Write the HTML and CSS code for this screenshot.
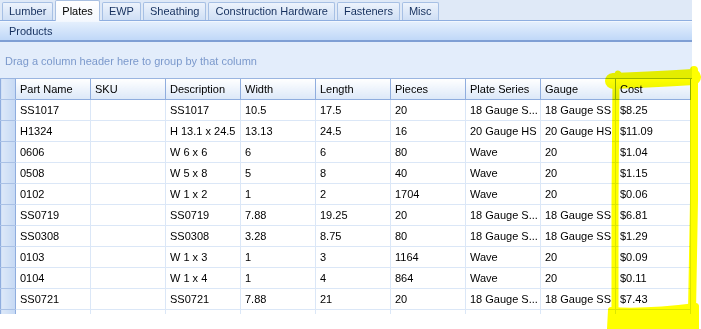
FILE: index.html
```html
<!DOCTYPE html>
<html lang="en">
<head>
    <meta charset="UTF-8">
    <title>Products - Plates</title>
    <link rel="stylesheet" href="styles.css">
</head>
<body>
    <div class="app">
        <!-- Tab strip -->
        <div class="tabs">
            <span class="tab">Lumber</span>
            <span class="tab active">Plates</span>
            <span class="tab">EWP</span>
            <span class="tab">Sheathing</span>
            <span class="tab">Construction Hardware</span>
            <span class="tab">Fasteners</span>
            <span class="tab">Misc</span>
        </div>

        <div class="title-bar">Products</div>

        <div class="group-panel">Drag a column header here to group by that column</div>

        <!-- Grid -->
        <div class="grid">
            <table>
                <thead>
                    <tr>
                        <th class="ind"></th>
                        <th>Part Name</th>
                        <th>SKU</th>
                        <th>Description</th>
                        <th>Width</th>
                        <th>Length</th>
                        <th>Pieces</th>
                        <th>Plate Series</th>
                        <th>Gauge</th>
                        <th>Cost</th>
                    </tr>
                </thead>
                <tbody id="rows"></tbody>
            </table>
        </div>
    </div>

    <svg class="marker" width="701" height="329" viewBox="0 0 701 329">
        <path d="M615,329 L615,200 L616,80 L618,74" />
        <path d="M613,81 C640,80 665,79 693,77" class="thick" />
        <path d="M694,70 L694,200 L692,312" class="right" />
        <path d="M611,310 C640,312 665,310 696,306 L696,329 L610,329 Z" class="fill" />
    </svg>

    <script>
        const plates = [
            ["SS1017", "", "SS1017", "10.5", "17.5", "20", "18 Gauge S...", "18 Gauge SS", "$8.25"],
            ["H1324", "", "H 13.1 x 24.5", "13.13", "24.5", "16", "20 Gauge HS", "20 Gauge HS", "$11.09"],
            ["0606", "", "W 6 x 6", "6", "6", "80", "Wave", "20", "$1.04"],
            ["0508", "", "W 5 x 8", "5", "8", "40", "Wave", "20", "$1.15"],
            ["0102", "", "W 1 x 2", "1", "2", "1704", "Wave", "20", "$0.06"],
            ["SS0719", "", "SS0719", "7.88", "19.25", "20", "18 Gauge S...", "18 Gauge SS", "$6.81"],
            ["SS0308", "", "SS0308", "3.28", "8.75", "80", "18 Gauge S...", "18 Gauge SS", "$1.29"],
            ["0103", "", "W 1 x 3", "1", "3", "1164", "Wave", "20", "$0.09"],
            ["0104", "", "W 1 x 4", "1", "4", "864", "Wave", "20", "$0.11"],
            ["SS0721", "", "SS0721", "7.88", "21", "20", "18 Gauge S...", "18 Gauge SS", "$7.43"],
            ["0305", "", "W 3 x 5", "3", "5", "272", "Wave", "20", "$0.45"]
        ];

        const tbody = document.getElementById("rows");
        plates.forEach(row => {
            const tr = document.createElement("tr");
            tr.innerHTML = '<td class="ind"></td>' + row.map(v => `<td>${v}</td>`).join('');
            tbody.appendChild(tr);
        });
    </script>
</body>
</html>
```

FILE: styles.css
```css
* {
    margin: 0;
    padding: 0;
    box-sizing: border-box;
}

body {
    background: #fff;
    font-family: 'Liberation Sans', Arial, sans-serif;
    font-size: 11px;
    color: #000;
    width: 701px;
    height: 329px;
    overflow: hidden;
    position: relative;
}

.app {
    width: 692px;
    height: 314px;
    background: #dfe9f7;
    overflow: hidden;
}

/* Tabs */
.tabs {
    height: 21px;
    display: flex;
    align-items: flex-end;
    gap: 2px;
    padding-left: 2px;
    border-bottom: 1px solid #8eaee0;
    background: #dfe9f7;
}

.tab {
    height: 18px;
    padding: 0 6px;
    line-height: 17px;
    border: 1px solid #a7c0e4;
    border-bottom: none;
    border-radius: 2px 2px 0 0;
    background: linear-gradient(#edf3fc, #cfdff5);
    color: #15305e;
    white-space: nowrap;
}

.tab.active {
    height: 21px;
    line-height: 21px;
    margin-bottom: -1px;
    background: linear-gradient(#ffffff, #f4f8fe);
    border-color: #a9c0e2;
    color: #000;
}

/* Products bar */
.title-bar {
    height: 21px;
    padding-left: 9px;
    line-height: 19px;
    color: #15305e;
    background: linear-gradient(#e4effd, #c0d8f8);
    border-top: 1px solid #f2f7fe;
    border-bottom: 2px solid #7f9fd4;
}

.group-panel {
    height: 36px;
    padding: 13px 0 0 5px;
    color: #7b99cc;
    background: #e3edfb;
}

/* Grid */
.grid {
    background: #fff;
    border-top: 1px solid #9ab5e0;
}

table {
    border-collapse: collapse;
    table-layout: fixed;
    width: 690px;
}

th,
td {
    width: 75px;
    height: 21px;
    padding: 0 4px;
    text-align: left;
    font-weight: normal;
    white-space: nowrap;
    overflow: hidden;
    border-right: 1px solid #dbe7f7;
    border-bottom: 1px solid #dbe7f7;
}

th {
    height: 20px;
    background: linear-gradient(#ffffff, #dce8f8);
    border-right: 1px solid #8fadde;
    border-bottom: 1px solid #8fadde;
}

th.ind,
td.ind {
    width: 15px;
    padding: 0;
    background: linear-gradient(90deg, #dde8f8, #c5d9f4);
    border-left: 1px solid #8fadde;
    border-right: 1px solid #8fadde;
    border-bottom: 1px solid #a9c1e6;
}

/* Yellow marker over the Cost column */
.marker {
    position: absolute;
    left: 0;
    top: 0;
    pointer-events: none;
    mix-blend-mode: multiply;
}

.marker path {
    fill: none;
    stroke: #ffff00;
    stroke-width: 7;
    stroke-linejoin: round;
    stroke-linecap: round;
}

.marker path.thick {
    stroke-width: 16;
}

.marker path.right {
    stroke-width: 8;
}

.marker path.fill {
    fill: #ffff00;
    stroke-width: 6;
}
```
